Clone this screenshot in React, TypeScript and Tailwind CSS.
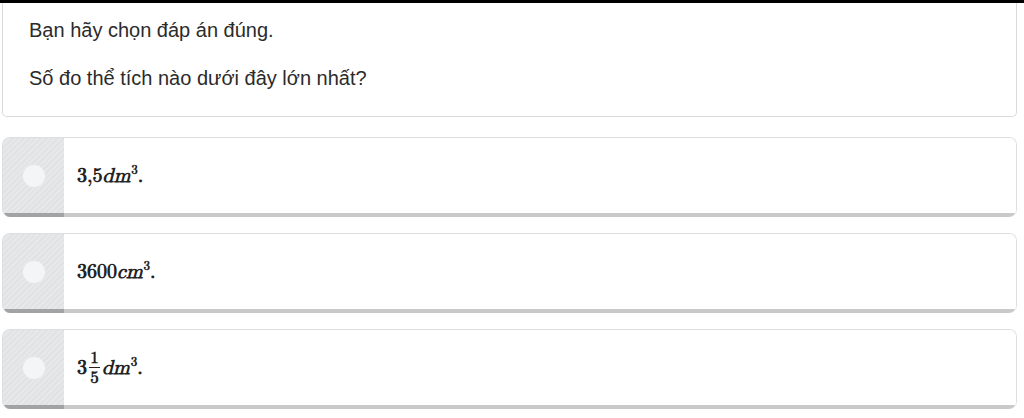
// Quiz question with three answer cards (math rendered as styled serif text).

const mathFont = "font-['Latin_Modern_Math','DejaVu_Serif','Liberation_Serif',serif]";

function Sup({ children }: { children: React.ReactNode }) {
  return <sup className="text-[13px] relative -top-[5px] ml-[1px]">{children}</sup>;
}

function Answer({ children }: { children: React.ReactNode }) {
  return (
    <div className="flex h-[80px] rounded-[8px] border border-[#dedede] border-b-0 overflow-hidden">
      <div className="w-[61px] flex items-center justify-center border-b-4 border-b-[#a3a3a3] bg-[#e4e6e8] bg-[repeating-linear-gradient(135deg,#e6e8ea_0px,#e6e8ea_2px,#e0e2e4_2px,#e0e2e4_4px)] flex-shrink-0">
        <div className="w-[22px] h-[22px] rounded-full bg-[#f4f5f6]" />
      </div>
      <div className={`flex-1 flex items-center pl-[13px] border-b-4 border-b-[#c9c9c9] bg-white text-[20px] font-bold text-[#222] ${mathFont}`}>
        {children}
      </div>
    </div>
  );
}

export default function App() {
  return (
    <div className="w-[1024px] h-[418px] bg-white border-t-[3px] border-black pl-[2px] pr-[7px] overflow-hidden">
      <div className="h-[114px] border border-t-0 border-[#dadada] rounded-b-[5px] px-[26px] pt-[14px] text-[20px] leading-[26px] text-[#2b2b2b] font-['Liberation_Sans','Arial',sans-serif]">
        <p>Bạn hãy chọn đáp án đúng.</p>
        <p className="mt-[22px]">Số đo thể tích nào dưới đây lớn nhất?</p>
      </div>

      <div className="mt-[20px] flex flex-col gap-[16px]">
        <Answer>
          <span>3,5</span>
          <i>dm</i>
          <Sup>3</Sup>
          <span>.</span>
        </Answer>
        <Answer>
          <span>3600</span>
          <i>cm</i>
          <Sup>3</Sup>
          <span>.</span>
        </Answer>
        <Answer>
          <span>3</span>
          <span className="inline-flex flex-col items-center mx-[2px] text-[17px] leading-[17px]">
            <span>1</span>
            <span className="w-[11px] h-[1.5px] bg-[#222] my-[1px]" />
            <span>5</span>
          </span>
          <i>dm</i>
          <Sup>3</Sup>
          <span>.</span>
        </Answer>
      </div>
    </div>
  );
}
